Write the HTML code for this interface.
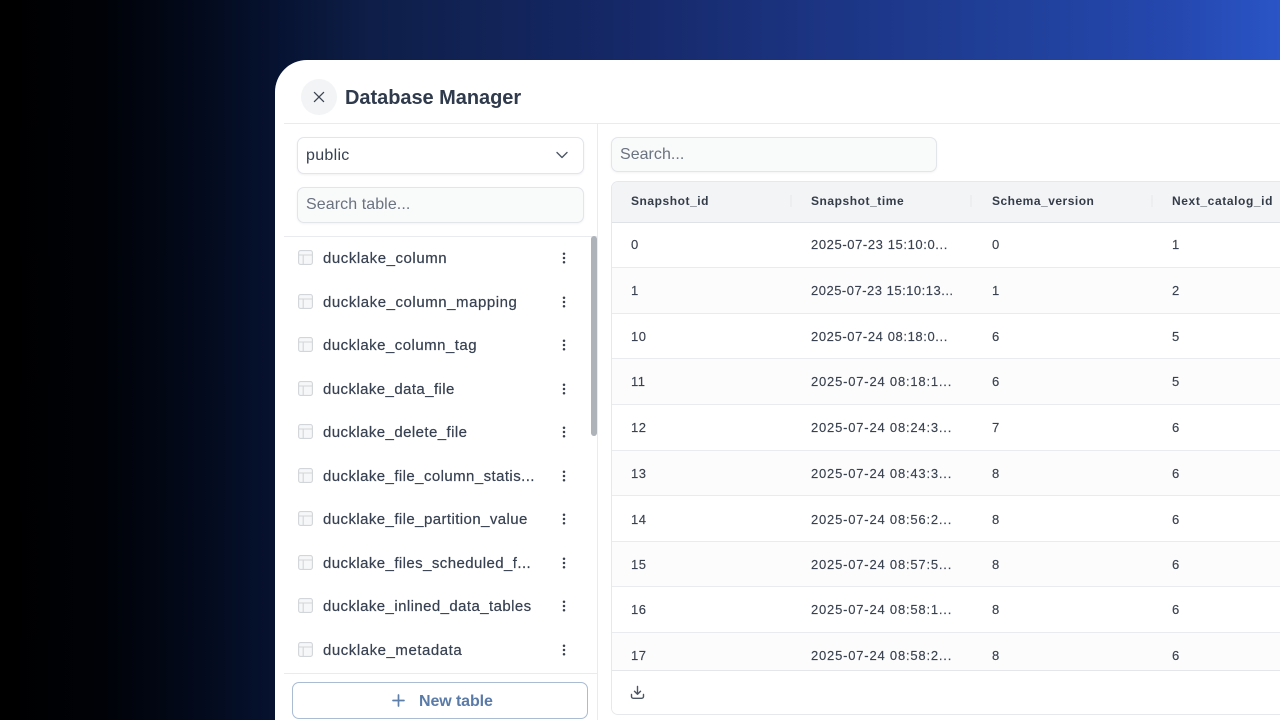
<!DOCTYPE html>
<html>
<head>
<meta charset="utf-8">
<style>
html,body{margin:0;padding:0;width:1280px;height:720px;overflow:hidden;background:#000}
body{position:relative;font-family:"Liberation Sans",sans-serif;color:#2d3748}
.bg{position:absolute;inset:0;background:linear-gradient(90deg,#000 0,#000207 100px,#030a1c 200px,#061230 275px,#0e1e48 370px,#16296a 640px,#1c3584 830px,#20409a 1020px,#2548b0 1180px,#2a55c6 1280px)}
.card{position:absolute;left:275px;top:60px;width:1005px;height:660px;background:#fff;border-top-left-radius:32px;overflow:hidden}
.a{position:absolute;white-space:nowrap}
.line{position:absolute;background:#e9ebee}
.box{position:absolute;box-sizing:border-box;border:1px solid #e2e5e9;border-radius:7px}
.t{position:absolute;left:48px;font-size:15px;line-height:20px;letter-spacing:.42px;color:#374151;white-space:nowrap;-webkit-text-stroke:.2px #374151}
.ic{position:absolute;left:23px;width:15px;height:15px}
.dots{position:absolute;left:287px;width:4px;height:12px}
.th{position:absolute;top:133px;font-size:12px;font-weight:bold;line-height:16px;letter-spacing:.55px;color:#343c49;white-space:nowrap}
.td{position:absolute;font-size:13px;line-height:18px;letter-spacing:.5px;color:#3a4250;white-space:nowrap;-webkit-text-stroke:.15px #3a4250}
.d{letter-spacing:.8px}
.e{letter-spacing:.6px}
.row{position:absolute;left:337px;width:668px;border-bottom:1px solid #e9ebee;box-sizing:border-box}
.sep{position:absolute;top:135px;width:2px;height:12px;background:#eceef0}
</style>
</head>
<body>
<div class="bg"></div>
<div class="card">
  <!-- header -->
  <div class="a" style="left:26px;top:19px;width:36px;height:36px;border-radius:50%;background:#f2f4f5"></div>
  <svg class="a" style="left:37px;top:30px" width="14" height="14" viewBox="0 0 14 14"><path d="M2.4 2.4L11.6 11.6M11.6 2.4L2.4 11.6" stroke="#3f4754" stroke-width="1.3" stroke-linecap="round" fill="none"/></svg>
  <div class="a" style="left:70px;top:25px;font-size:20px;line-height:26px;font-weight:bold;color:#2f3a4c;letter-spacing:-.04px">Database Manager</div>
  <div class="line" style="left:9px;top:63px;width:996px;height:1px"></div>
  <div class="line" style="left:322px;top:64px;width:1px;height:596px"></div>

  <!-- sidebar controls -->
  <div class="box" style="left:22px;top:77px;width:287px;height:37px;background:#fff;box-shadow:0 1px 2px rgba(0,0,0,.06)"></div>
  <div class="a" style="left:31px;top:86px;font-size:16px;line-height:20px;color:#374151;letter-spacing:.3px">public</div>
  <svg class="a" style="left:279px;top:89px" width="16" height="12" viewBox="0 0 16 12"><path d="M3 3.5L8 8.5L13 3.5" stroke="#4b5563" stroke-width="1.4" fill="none" stroke-linecap="round" stroke-linejoin="round"/></svg>
  <div class="box" style="left:22px;top:127px;width:287px;height:36px;background:#f9fafa;box-shadow:0 1px 2px rgba(0,0,0,.05)"></div>
  <div class="a" style="left:31px;top:135px;font-size:16px;line-height:20px;color:#6b7280;letter-spacing:.08px">Search table...</div>
  <div class="line" style="left:9px;top:176px;width:313px;height:1px"></div>

  <!-- list -->
  <div class="t" style="top:189px;letter-spacing:.55px">ducklake_column</div>
  <div class="t" style="top:233px;letter-spacing:.55px">ducklake_column_mapping</div>
  <div class="t" style="top:276px;letter-spacing:.47px">ducklake_column_tag</div>
  <div class="t" style="top:320px">ducklake_data_file</div>
  <div class="t" style="top:363px">ducklake_delete_file</div>
  <div class="t" style="top:407px">ducklake_file_column_statis...</div>
  <div class="t" style="top:450px">ducklake_file_partition_value</div>
  <div class="t" style="top:494px">ducklake_files_scheduled_f...</div>
  <div class="t" style="top:537px">ducklake_inlined_data_tables</div>
  <div class="t" style="top:581px;letter-spacing:.54px">ducklake_metadata</div>

  <svg class="ic" style="top:190px" viewBox="0 0 15 15"><g fill="#f6f7f8" stroke="#d2d5d9" stroke-width="1.1"><rect x=".6" y=".6" width="13.8" height="13.8" rx="2"/><path d="M.6 5H14.4M5.2 5V14.4" fill="none"/></g></svg>
  <svg class="ic" style="top:234px" viewBox="0 0 15 15"><g fill="#f6f7f8" stroke="#d2d5d9" stroke-width="1.1"><rect x=".6" y=".6" width="13.8" height="13.8" rx="2"/><path d="M.6 5H14.4M5.2 5V14.4" fill="none"/></g></svg>
  <svg class="ic" style="top:277px" viewBox="0 0 15 15"><g fill="#f6f7f8" stroke="#d2d5d9" stroke-width="1.1"><rect x=".6" y=".6" width="13.8" height="13.8" rx="2"/><path d="M.6 5H14.4M5.2 5V14.4" fill="none"/></g></svg>
  <svg class="ic" style="top:321px" viewBox="0 0 15 15"><g fill="#f6f7f8" stroke="#d2d5d9" stroke-width="1.1"><rect x=".6" y=".6" width="13.8" height="13.8" rx="2"/><path d="M.6 5H14.4M5.2 5V14.4" fill="none"/></g></svg>
  <svg class="ic" style="top:364px" viewBox="0 0 15 15"><g fill="#f6f7f8" stroke="#d2d5d9" stroke-width="1.1"><rect x=".6" y=".6" width="13.8" height="13.8" rx="2"/><path d="M.6 5H14.4M5.2 5V14.4" fill="none"/></g></svg>
  <svg class="ic" style="top:408px" viewBox="0 0 15 15"><g fill="#f6f7f8" stroke="#d2d5d9" stroke-width="1.1"><rect x=".6" y=".6" width="13.8" height="13.8" rx="2"/><path d="M.6 5H14.4M5.2 5V14.4" fill="none"/></g></svg>
  <svg class="ic" style="top:451px" viewBox="0 0 15 15"><g fill="#f6f7f8" stroke="#d2d5d9" stroke-width="1.1"><rect x=".6" y=".6" width="13.8" height="13.8" rx="2"/><path d="M.6 5H14.4M5.2 5V14.4" fill="none"/></g></svg>
  <svg class="ic" style="top:495px" viewBox="0 0 15 15"><g fill="#f6f7f8" stroke="#d2d5d9" stroke-width="1.1"><rect x=".6" y=".6" width="13.8" height="13.8" rx="2"/><path d="M.6 5H14.4M5.2 5V14.4" fill="none"/></g></svg>
  <svg class="ic" style="top:538px" viewBox="0 0 15 15"><g fill="#f6f7f8" stroke="#d2d5d9" stroke-width="1.1"><rect x=".6" y=".6" width="13.8" height="13.8" rx="2"/><path d="M.6 5H14.4M5.2 5V14.4" fill="none"/></g></svg>
  <svg class="ic" style="top:582px" viewBox="0 0 15 15"><g fill="#f6f7f8" stroke="#d2d5d9" stroke-width="1.1"><rect x=".6" y=".6" width="13.8" height="13.8" rx="2"/><path d="M.6 5H14.4M5.2 5V14.4" fill="none"/></g></svg>

  <svg class="dots" style="top:192px" viewBox="0 0 4 12"><g fill="#39414e"><circle cx="2" cy="1.7" r="1.25"/><circle cx="2" cy="6" r="1.25"/><circle cx="2" cy="10.3" r="1.25"/></g></svg>
  <svg class="dots" style="top:236px" viewBox="0 0 4 12"><g fill="#39414e"><circle cx="2" cy="1.7" r="1.25"/><circle cx="2" cy="6" r="1.25"/><circle cx="2" cy="10.3" r="1.25"/></g></svg>
  <svg class="dots" style="top:279px" viewBox="0 0 4 12"><g fill="#39414e"><circle cx="2" cy="1.7" r="1.25"/><circle cx="2" cy="6" r="1.25"/><circle cx="2" cy="10.3" r="1.25"/></g></svg>
  <svg class="dots" style="top:323px" viewBox="0 0 4 12"><g fill="#39414e"><circle cx="2" cy="1.7" r="1.25"/><circle cx="2" cy="6" r="1.25"/><circle cx="2" cy="10.3" r="1.25"/></g></svg>
  <svg class="dots" style="top:366px" viewBox="0 0 4 12"><g fill="#39414e"><circle cx="2" cy="1.7" r="1.25"/><circle cx="2" cy="6" r="1.25"/><circle cx="2" cy="10.3" r="1.25"/></g></svg>
  <svg class="dots" style="top:410px" viewBox="0 0 4 12"><g fill="#39414e"><circle cx="2" cy="1.7" r="1.25"/><circle cx="2" cy="6" r="1.25"/><circle cx="2" cy="10.3" r="1.25"/></g></svg>
  <svg class="dots" style="top:453px" viewBox="0 0 4 12"><g fill="#39414e"><circle cx="2" cy="1.7" r="1.25"/><circle cx="2" cy="6" r="1.25"/><circle cx="2" cy="10.3" r="1.25"/></g></svg>
  <svg class="dots" style="top:497px" viewBox="0 0 4 12"><g fill="#39414e"><circle cx="2" cy="1.7" r="1.25"/><circle cx="2" cy="6" r="1.25"/><circle cx="2" cy="10.3" r="1.25"/></g></svg>
  <svg class="dots" style="top:540px" viewBox="0 0 4 12"><g fill="#39414e"><circle cx="2" cy="1.7" r="1.25"/><circle cx="2" cy="6" r="1.25"/><circle cx="2" cy="10.3" r="1.25"/></g></svg>
  <svg class="dots" style="top:584px" viewBox="0 0 4 12"><g fill="#39414e"><circle cx="2" cy="1.7" r="1.25"/><circle cx="2" cy="6" r="1.25"/><circle cx="2" cy="10.3" r="1.25"/></g></svg>

  <!-- scrollbar -->
  <div class="a" style="left:316px;top:176px;width:6px;height:200px;border-radius:3px;background:#aeb2b9"></div>

  <!-- new table -->
  <div class="line" style="left:9px;top:613px;width:313px;height:1px"></div>
  <div class="a" style="left:17px;top:622px;width:296px;height:37px;box-sizing:border-box;border:1px solid #a9bcd4;border-radius:7px;background:#fff"></div>
  <svg class="a" style="left:116px;top:633px" width="15" height="15" viewBox="0 0 15 15"><path d="M7.5 2V13M2 7.5H13" stroke="#5f7fab" stroke-width="1.7" stroke-linecap="round" fill="none"/></svg>
  <div class="a" style="left:144px;top:632px;font-size:16px;line-height:20px;font-weight:bold;color:#5a7ba8;letter-spacing:-.1px">New table</div>

  <!-- right search -->
  <div class="box" style="left:336px;top:77px;width:326px;height:35px;background:#f9fafa;box-shadow:0 1px 2px rgba(0,0,0,.05)"></div>
  <div class="a" style="left:345px;top:85px;font-size:16px;line-height:20px;color:#6b7280;letter-spacing:.03px">Search...</div>

  <!-- table -->
  <div class="a" style="left:336px;top:121px;width:669px;height:534px;box-sizing:border-box;border:1px solid #e6e8eb;border-right:0;border-radius:7px 0 0 7px;background:#fff"></div>
  <div class="a" style="left:337px;top:122px;width:668px;height:40px;background:#f3f4f6;border-bottom:1px solid #dfe2e6;border-top-left-radius:6px"></div>
  <div class="th" style="left:356px">Snapshot_id</div>
  <div class="th" style="left:536px">Snapshot_time</div>
  <div class="th" style="left:717px;letter-spacing:.5px">Schema_version</div>
  <div class="th" style="left:897px;letter-spacing:.6px">Next_catalog_id</div>
  <div class="sep" style="left:515px"></div>
  <div class="sep" style="left:695px"></div>
  <div class="sep" style="left:876px"></div>

  <div class="row" style="top:163px;height:45px;background:#fff"></div>
  <div class="row" style="top:208px;height:46px;background:#fcfcfc"></div>
  <div class="row" style="top:254px;height:45px;background:#fff"></div>
  <div class="row" style="top:299px;height:46px;background:#fcfcfc"></div>
  <div class="row" style="top:345px;height:46px;background:#fff"></div>
  <div class="row" style="top:391px;height:45px;background:#fcfcfc"></div>
  <div class="row" style="top:436px;height:46px;background:#fff"></div>
  <div class="row" style="top:482px;height:45px;background:#fcfcfc"></div>
  <div class="row" style="top:527px;height:46px;background:#fff"></div>
  <div class="row" style="top:573px;height:38px;background:#fcfcfc;border-bottom:1px solid #e4e6e9"></div>

  <div class="td" style="left:356px;top:176px">0</div><div class="td e" style="left:536px;top:176px">2025-07-23 15:10:0...</div><div class="td" style="left:717px;top:176px">0</div><div class="td" style="left:897px;top:176px">1</div>
  <div class="td" style="left:356px;top:222px">1</div><div class="td" style="left:536px;top:222px">2025-07-23 15:10:13...</div><div class="td" style="left:717px;top:222px">1</div><div class="td" style="left:897px;top:222px">2</div>
  <div class="td" style="left:356px;top:268px">10</div><div class="td e" style="left:536px;top:268px">2025-07-24 08:18:0...</div><div class="td" style="left:717px;top:268px">6</div><div class="td" style="left:897px;top:268px">5</div>
  <div class="td" style="left:356px;top:313px">11</div><div class="td d" style="left:536px;top:313px">2025-07-24 08:18:1...</div><div class="td" style="left:717px;top:313px">6</div><div class="td" style="left:897px;top:313px">5</div>
  <div class="td" style="left:356px;top:359px">12</div><div class="td d" style="left:536px;top:359px">2025-07-24 08:24:3...</div><div class="td" style="left:717px;top:359px">7</div><div class="td" style="left:897px;top:359px">6</div>
  <div class="td" style="left:356px;top:405px">13</div><div class="td d" style="left:536px;top:405px">2025-07-24 08:43:3...</div><div class="td" style="left:717px;top:405px">8</div><div class="td" style="left:897px;top:405px">6</div>
  <div class="td" style="left:356px;top:451px">14</div><div class="td d" style="left:536px;top:451px">2025-07-24 08:56:2...</div><div class="td" style="left:717px;top:451px">8</div><div class="td" style="left:897px;top:451px">6</div>
  <div class="td" style="left:356px;top:496px">15</div><div class="td d" style="left:536px;top:496px">2025-07-24 08:57:5...</div><div class="td" style="left:717px;top:496px">8</div><div class="td" style="left:897px;top:496px">6</div>
  <div class="td" style="left:356px;top:541px">16</div><div class="td d" style="left:536px;top:541px">2025-07-24 08:58:1...</div><div class="td" style="left:717px;top:541px">8</div><div class="td" style="left:897px;top:541px">6</div>
  <div class="td" style="left:356px;top:587px">17</div><div class="td d" style="left:536px;top:587px">2025-07-24 08:58:2...</div><div class="td" style="left:717px;top:587px">8</div><div class="td" style="left:897px;top:587px">6</div>

  <!-- download icon -->
  <div class="a" style="left:337px;top:611px;width:668px;height:43px;background:#fff;border-bottom-left-radius:6px"></div>
  <svg class="a" style="left:355px;top:625px" width="15" height="15" viewBox="0 0 15 15"><path d="M7.5 1.5V9M4.5 6.2L7.5 9.2L10.5 6.2M1.5 9.5V11.5A1.8 1.8 0 0 0 3.3 13.3H11.7A1.8 1.8 0 0 0 13.5 11.5V9.5" stroke="#4b5563" stroke-width="1.4" fill="none" stroke-linecap="round" stroke-linejoin="round"/></svg>
</div>
</body>
</html>
